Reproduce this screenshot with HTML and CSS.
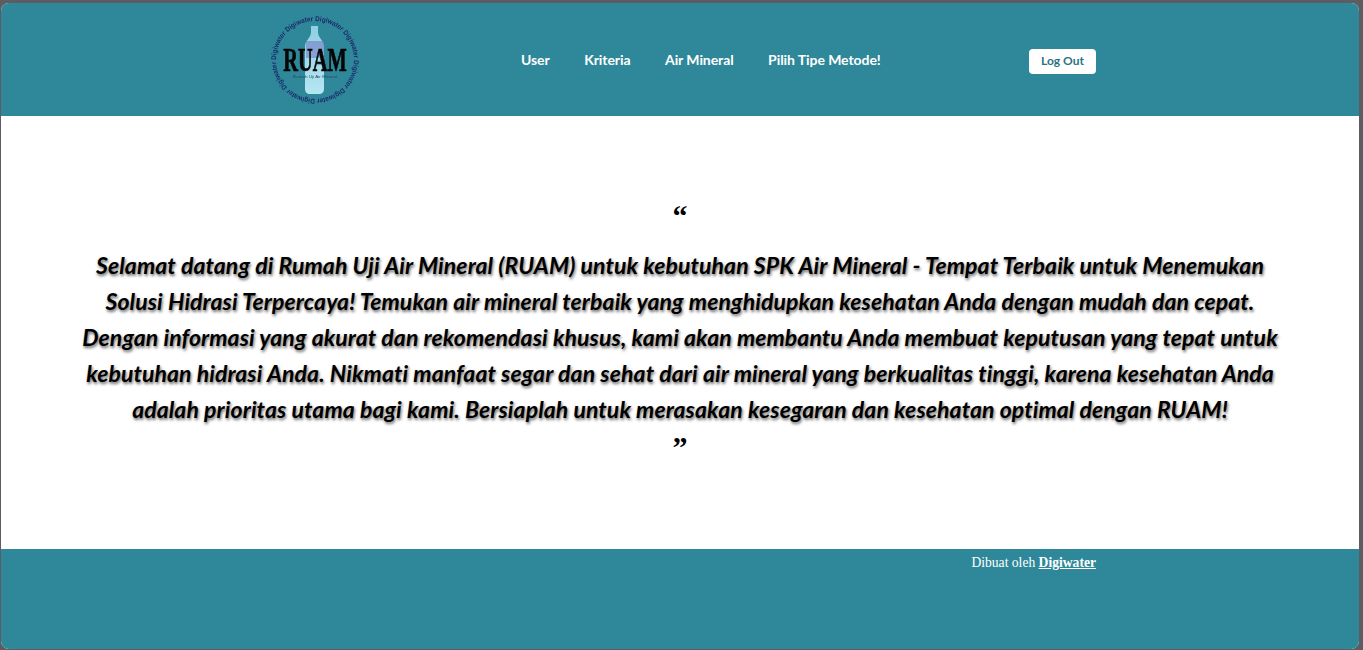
FILE: index.html
```html
<!DOCTYPE html>
<html lang="en">
<head>
  <meta charset="UTF-8">
  <meta name="viewport" content="width=device-width, initial-scale=1.0">
  <title>RUAM</title>
  <link rel="stylesheet" href="styles.css">
</head>
<body>
  <div class="page">
    <header class="site-header">
      <div class="header-inner">
        <a href="#" class="logo">
          <svg width="94" height="94" viewBox="0 0 94 94">
            <defs>
              <path id="ring" d="M47 47 m-39 0 a39 39 0 1 1 78 0 a39 39 0 1 1 -78 0"/>
              <linearGradient id="bottle" x1="0" y1="0" x2="0" y2="1">
                <stop offset="0" stop-color="#8fcfe4"/>
                <stop offset="1" stop-color="#b5e6f2"/>
              </linearGradient>
            </defs>
            <text class="logo-ring"><textPath href="#ring" textLength="243" lengthAdjust="spacingAndGlyphs">Digiwater Digiwater Digiwater Digiwater Digiwater Digiwater Digiwater Digiwater</textPath></text>
            <path d="M43 13 h7 v6 c0 6 6 8 6 15 v42 c0 3 -2 5 -5 5 h-9 c-3 0 -5 -2 -5 -5 v-42 c0 -7 6 -9 6 -15 z" fill="url(#bottle)"/>
            <rect x="38" y="28" width="18" height="17" fill="#6f74c0" opacity="0.55"/>
            <text class="logo-name" transform="translate(47 58) scale(0.6 1)">RUAM</text>
            <text class="logo-sub" transform="translate(47 65) scale(1.15 1)">Rumah Uji Air Mineral</text>
          </svg>
        </a>
        <nav class="nav">
          <a href="#">User</a>
          <a href="#">Kriteria</a>
          <a href="#">Air Mineral</a>
          <a href="#">Pilih Tipe Metode!</a>
        </nav>
        <a href="#" class="btn-logout">Log Out</a>
      </div>
    </header>

    <main class="content">
      <blockquote class="quote">
        <div class="quote-mark">“</div>
        <p>Selamat datang di Rumah Uji Air Mineral (RUAM) untuk kebutuhan SPK Air Mineral - Tempat Terbaik untuk Menemukan<br>
        Solusi Hidrasi Terpercaya! Temukan air mineral terbaik yang menghidupkan kesehatan Anda dengan mudah dan cepat.<br>
        Dengan informasi yang akurat dan rekomendasi khusus, kami akan membantu Anda membuat keputusan yang tepat untuk<br>
        kebutuhan hidrasi Anda. Nikmati manfaat segar dan sehat dari air mineral yang berkualitas tinggi, karena kesehatan Anda<br>
        adalah prioritas utama bagi kami. Bersiaplah untuk merasakan kesegaran dan kesehatan optimal dengan RUAM!</p>
        <div class="quote-mark quote-end">”</div>
      </blockquote>
    </main>

    <footer class="site-footer">
      <div class="footer-inner">Dibuat oleh <a href="#">Digiwater</a></div>
    </footer>
  </div>
</body>
</html>
```

FILE: styles.css
```css
* {
  margin: 0;
  padding: 0;
  box-sizing: border-box;
}

body {
  background-color: #5c5c62;
  height: 650px;
  overflow: hidden;
  padding: 3px 4px 1px 1px;
  font-family: 'Lato', sans-serif;
}

.page {
  height: 646px;
  display: flex;
  flex-direction: column;
  background-color: white;
  border-radius: 8px;
  overflow: hidden;
}

.site-header {
  height: 113px;
  background-color: #2e8899;
  flex-shrink: 0;
}

.header-inner {
  width: 832px;
  height: 100%;
  margin: 0 auto;
  display: flex;
  align-items: center;
}

.logo {
  display: flex;
  width: 257px;
  padding-left: 4px;
  filter: blur(0.35px);
}

.nav {
  display: flex;
  gap: 34.5px;
  flex: 1;
  margin-top: -1px;
}

.nav a {
  color: white;
  font-size: 14px;
  font-weight: 700;
  letter-spacing: -0.07px;
  text-decoration: none;
}

.btn-logout {
  display: block;
  width: 67px;
  height: 25px;
  line-height: 23px;
  margin-top: 3px;
  text-align: center;
  background-color: white;
  color: #2b7282;
  font-size: 12px;
  font-weight: 700;
  border-radius: 4px;
  text-decoration: none;
}

.logo-ring {
  font-family: 'Liberation Sans', sans-serif;
  font-size: 7px;
  font-weight: 700;
  fill: #1b2a6b;
}

.logo-name {
  font-family: 'Liberation Serif', serif;
  font-size: 34px;
  font-weight: 700;
  text-anchor: middle;
  fill: #050505;
  stroke: #050505;
  stroke-width: 0.7px;
}

.logo-sub {
  font-family: 'Liberation Sans', sans-serif;
  font-size: 4px;
  text-anchor: middle;
  fill: #2a4a5a;
}

.content {
  height: 433px;
  flex-shrink: 0;
  display: flex;
  justify-content: center;
  padding-top: 77px;
}

.quote {
  text-align: center;
  font-style: italic;
  font-weight: 700;
  font-size: 23px;
  letter-spacing: 0.09px;
  line-height: 36px;
  color: #000;
  text-shadow: 1px 2px 3px rgba(0, 0, 0, 0.6);
}

.quote-mark {
  font-family: 'Liberation Serif', serif;
  font-style: normal;
  font-weight: 700;
  font-size: 30px;
  line-height: 36px;
  text-shadow: none;
  padding-top: 5px;
  margin-bottom: 13px;
}

.quote-end {
  margin-bottom: 0;
  padding-top: 2px;
  margin-top: 0;
}

.site-footer {
  flex: 1;
  background-color: #2e8899;
}

.footer-inner {
  width: 832px;
  margin: 0 auto;
  padding-top: 6px;
  text-align: right;
  font-family: 'Liberation Serif', serif;
  font-size: 13.6px;
  color: white;
}

.footer-inner a {
  color: white;
  font-weight: 700;
}
```
